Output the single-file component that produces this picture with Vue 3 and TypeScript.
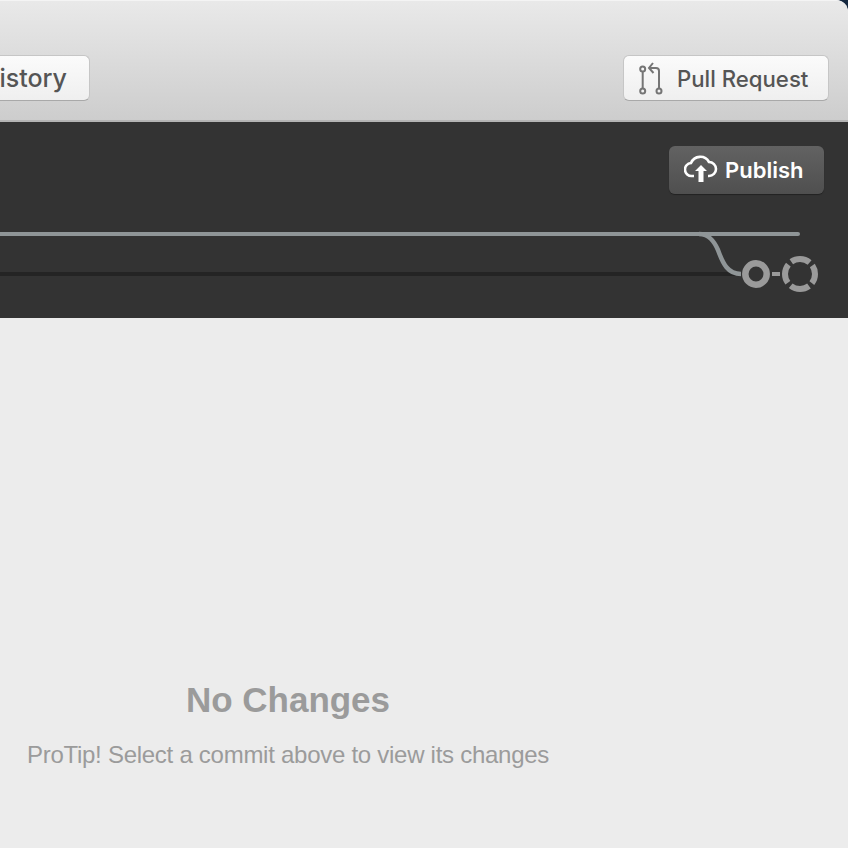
<script setup lang="ts">
// one dash per quadrant, gaps sit on the diagonals
const ringDash = '19.6 4'
const ringOffset = 9.8
</script>

<template>
  <div class="window">
    <header class="toolbar">
      <button class="tool-btn history">History</button>
      <button class="tool-btn pull">
        <svg class="pr-icon" width="26" height="34" viewBox="0 0 26 34" fill="none">
          <circle cx="3.7" cy="8" r="2.5" stroke="#757575" stroke-width="2" />
          <circle cx="3.7" cy="30" r="2.5" stroke="#757575" stroke-width="2" />
          <circle cx="20" cy="30" r="2.5" stroke="#757575" stroke-width="2" />
          <path d="M3.7 10.5v17M20 27.5V10q0-3-3-3h-7" stroke="#757575" stroke-width="2" />
          <path d="M14 2 10 7l4.5 5" stroke="#757575" stroke-width="2" />
        </svg>
        <span>Pull Request</span>
      </button>
    </header>

    <section class="graph-panel">
      <div class="publish-row">
        <button class="publish">
          <svg width="34" height="30" viewBox="0 0 34 30" fill="none">
            <path
              d="M10 21H8a6.5 6.5 0 0 1-1-13A10 10 0 0 1 25 7a7 7 0 0 1 0 14h-1"
              stroke="#fff"
              stroke-width="2.6"
            />
            <path d="M11 16 17 10l6 6h-3.5V27h-5V16z" fill="#fff" />
          </svg>
          <span>Publish</span>
        </button>
      </div>
      <svg class="graph" width="848" height="124" viewBox="0 194 848 124" fill="none">
        <path d="M0 274H736" stroke="#242424" stroke-width="4" />
        <path d="M0 234H798" stroke="#8f9597" stroke-width="4" stroke-linecap="round" />
        <path d="M699 234c10 0 15 7 19 16 5 14 10 24 23 24" stroke="#8f9597" stroke-width="4.5" />
        <circle cx="756" cy="274" r="10.7" stroke="#9a9a9a" stroke-width="6.5" />
        <path d="M772 274h8" stroke="#9a9a9a" stroke-width="4" />
        <circle
          cx="800"
          cy="274"
          r="15"
          stroke="#9a9a9a"
          stroke-width="6"
          :stroke-dasharray="ringDash"
          :stroke-dashoffset="ringOffset"
        />
      </svg>
    </section>

    <main class="empty">
      <h1>No Changes</h1>
      <p>ProTip! Select a commit above to view its changes</p>
    </main>
  </div>
</template>

<style>
html,
body {
  margin: 0;
  background: #14283f;
}
</style>

<style scoped>
.window {
  width: 848px;
  height: 848px;
  overflow: hidden;
  display: flex;
  flex-direction: column;
  border-top-right-radius: 12px;
  background: #ececec;
  font-family: "Liberation Sans", Arial, sans-serif;
}

.toolbar {
  box-sizing: border-box;
  height: 122px;
  flex: none;
  display: flex;
  justify-content: space-between;
  align-items: flex-start;
  padding: 54px 19px 0 0;
  background: linear-gradient(#e9e9e9, #cdcdcd);
  border-top: 1px solid #f4f4f4;
  border-bottom: 2px solid #b4b4b4;
}

.tool-btn {
  box-sizing: border-box;
  height: 46px;
  display: flex;
  align-items: center;
  border: 1px solid #c6c6c6;
  border-bottom-color: #a9a9a9;
  border-radius: 6px;
  background: linear-gradient(#fbfbfb, #efefef);
  color: #555;
  font-family: Inter, "Liberation Sans", sans-serif;
  font-size: 22.2px;
  font-weight: 500;
  padding: 0;
}

.history {
  width: 130px;
  margin-left: -40px;
  justify-content: flex-end;
  padding-right: 22px;
  font-size: 25px;
}

.pull {
  width: 206px;
  padding-left: 15px;
  gap: 12px;
}

.pr-icon {
  flex: none;
}

.graph-panel {
  flex: none;
  height: 196px;
  background: #333;
  overflow: hidden;
}

.publish-row {
  height: 72px;
  box-sizing: border-box;
  padding: 24px 24px 0 0;
  display: flex;
  justify-content: flex-end;
}

.publish {
  box-sizing: border-box;
  width: 155px;
  height: 48px;
  display: flex;
  align-items: center;
  gap: 7px;
  padding: 0 0 0 15px;
  border: none;
  border-radius: 6px;
  background: linear-gradient(#626262, #4f4f4f);
  box-shadow: 0 1px 1px #222;
  color: #fff;
  font-family: Inter, "Liberation Sans", sans-serif;
  font-size: 22px;
  font-weight: 600;
}

.graph {
  display: block;
}

.empty {
  flex: 1;
  padding: 362px 272px 0 0;
  text-align: center;
  color: #9b9b9b;
}

.empty h1 {
  margin: 0;
  font-size: 35px;
  line-height: 40px;
  font-weight: 700;
  letter-spacing: -0.02px;
}

.empty p {
  margin: 20px 0 0;
  font-size: 24px;
  line-height: 30px;
  letter-spacing: -0.27px;
  white-space: nowrap;
}
</style>
